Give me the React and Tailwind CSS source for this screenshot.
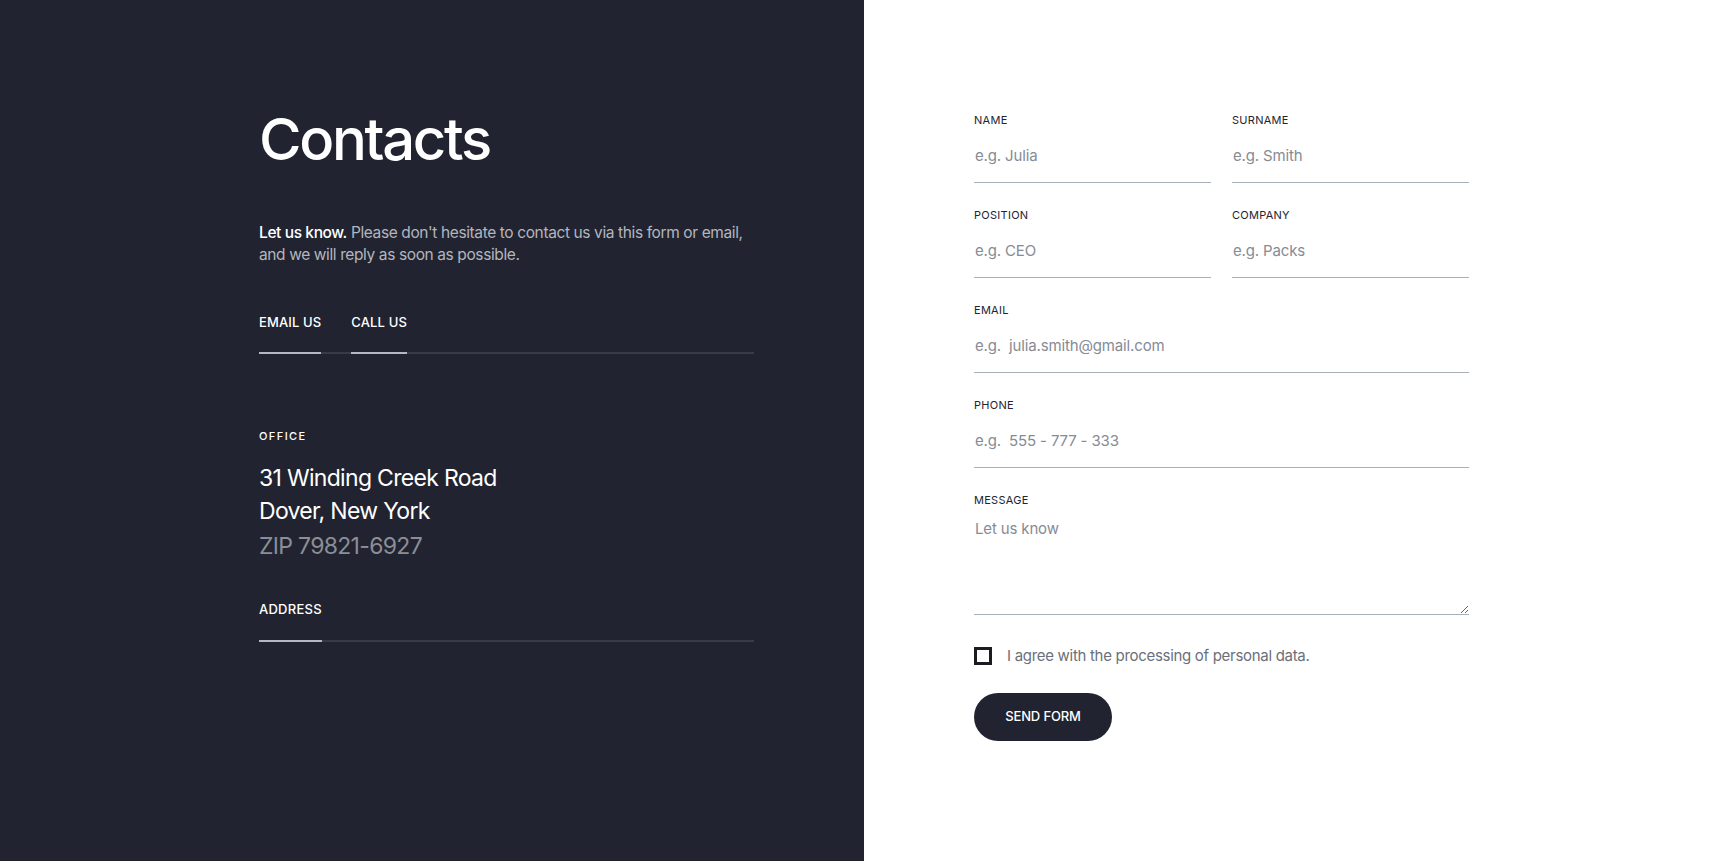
import React from "react";

const font = { fontFamily: "Inter, 'Noto Sans', sans-serif" };

function Field({ label, placeholder }) {
  return (
    <label className="flex flex-col">
      <span className="text-[11px] leading-4 tracking-[0.025em] uppercase text-[#23252e]">{label}</span>
      <input
        placeholder={placeholder}
        className="w-full bg-transparent pt-[16px] pb-[14px] pl-px text-[15px] leading-6 tracking-[-0.01em] text-[#23252e] placeholder:text-[#868b95] border-b border-[#a9afb8] outline-none"
      />
    </label>
  );
}

export default function App() {
  return (
    <div className="flex w-full min-h-[861px]" style={font}>
      <div className="w-1/2 bg-[#212430] pl-[259px] pt-[110px]">
        <div className="w-[495px]">
          <h1 className="text-[58px] leading-none font-medium tracking-[-0.04em] text-white">Contacts</h1>
          <p className="mt-[54px] text-[15.5px] leading-[22px] text-[#b3b6be] tracking-[-0.025em]">
            <span className="text-white font-medium">Let us know.</span> Please don't hesitate to contact us via this form or email, and we will reply as soon as possible.
          </p>
          <div className="mt-[48px] flex gap-[30px] border-b-2 border-[#383b47]">
            <span className="-mb-[2px] pb-[22px] border-b-2 border-[#b4b8c2] text-[13px] leading-4 font-medium tracking-[0.01em] text-white">EMAIL US</span>
            <span className="-mb-[2px] pb-[22px] border-b-2 border-[#b4b8c2] text-[13px] leading-4 font-medium tracking-[0.01em] text-white">CALL US</span>
          </div>
          <div className="mt-[74px] text-[11px] leading-4 font-medium tracking-[0.13em] text-white">OFFICE</div>
          <div className="mt-[18px] text-[23px] leading-[33px] tracking-[-0.03em] text-white">
            <div>31 Winding Creek Road</div>
            <div>Dover, New York</div>
            <div className="mt-[2px] text-[#8b8e97]">ZIP 79821-6927</div>
          </div>
          <div className="mt-[38px] flex border-b-2 border-[#383b47]">
            <span className="-mb-[2px] pb-[23px] border-b-2 border-[#b4b8c2] text-[13px] leading-4 font-medium tracking-[0.02em] text-white">ADDRESS</span>
          </div>
        </div>
      </div>
      <div className="w-1/2 bg-white pl-[110px] pt-[112px]">
        <form className="w-[495px] flex flex-col" onSubmit={(e) => e.preventDefault()}>
          <div className="grid grid-cols-2 gap-x-[21px] gap-y-[24px]">
            <Field label="Name" placeholder="e.g. Julia" />
            <Field label="Surname" placeholder="e.g. Smith" />
            <Field label="Position" placeholder="e.g. CEO" />
            <Field label="Company" placeholder="e.g. Packs" />
            <div className="col-span-2"><Field label="Email" placeholder="e.g.  julia.smith@gmail.com" /></div>
            <div className="col-span-2"><Field label="Phone" placeholder="e.g.  555 - 777 - 333" /></div>
            <label className="col-span-2 flex flex-col">
              <span className="text-[11px] leading-4 tracking-[0.025em] uppercase text-[#23252e]">Message</span>
              <textarea
                placeholder="Let us know"
                className="w-full h-[107px] bg-transparent pt-[9px] pl-px text-[15px] leading-6 tracking-[-0.01em] text-[#23252e] placeholder:text-[#868b95] border-b border-[#a9afb8] outline-none"
              />
            </label>
          </div>
          <label className="mt-[29px] flex items-center gap-[15px] h-6">
            <span className="w-[18px] h-[18px] border-[3px] border-[#1b1c22] box-border"></span>
            <span className="text-[15px] leading-6 text-[#6b6f7a] tracking-[-0.02em]">I agree with the processing of personal data.</span>
          </label>
          <div className="mt-[25px]">
            <button type="submit" className="h-[48px] w-[138px] rounded-full bg-[#212430] text-white text-[13px] font-medium tracking-[-0.01em]">SEND FORM</button>
          </div>
        </form>
      </div>
    </div>
  );
}
